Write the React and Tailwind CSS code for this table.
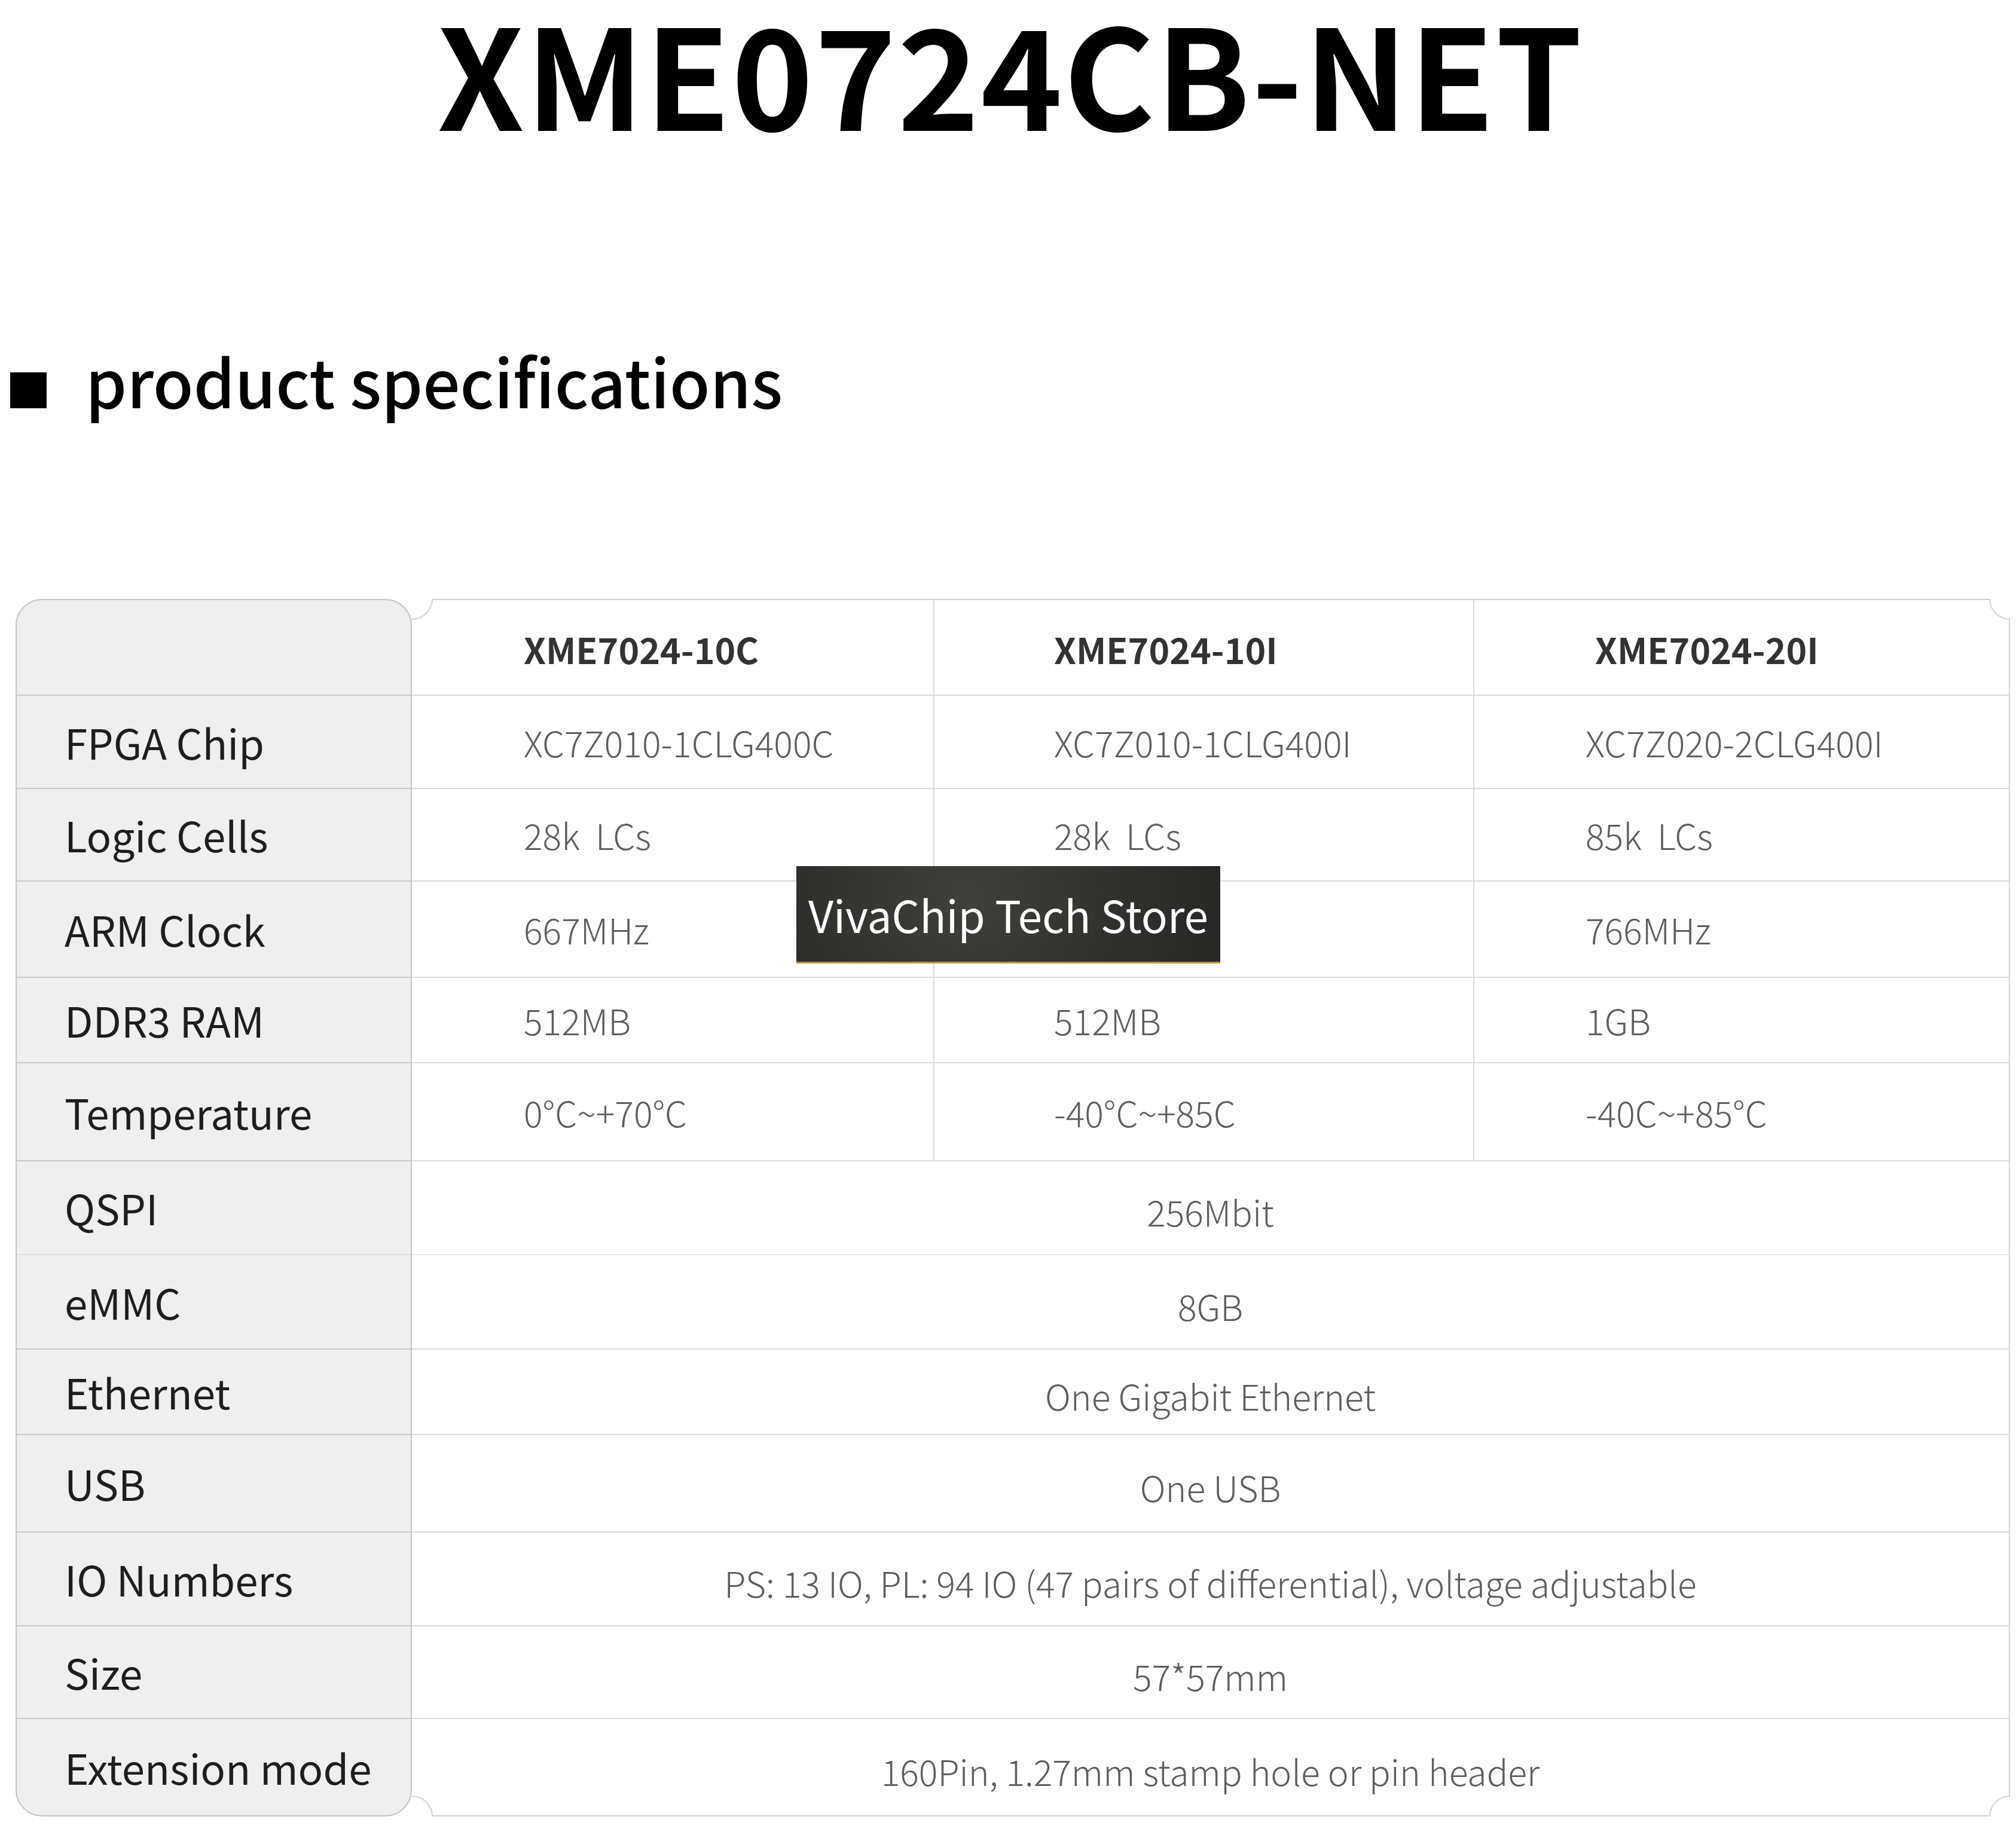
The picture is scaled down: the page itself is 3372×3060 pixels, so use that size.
import React from 'react';

const models = ['XME7024-10C', 'XME7024-10I', 'XME7024-20I'];

const splitRows = [
    { label: 'FPGA Chip', h: 'h-[156px]', vals: ['XC7Z010-1CLG400C', 'XC7Z010-1CLG400I', 'XC7Z020-2CLG400I'] },
    { label: 'Logic Cells', h: 'h-[155px]', vals: ['28k  LCs', '28k  LCs', '85k  LCs'] },
    { label: 'ARM Clock', h: 'h-[161px]', vals: ['667MHz', '667MHz', '766MHz'] },
    { label: 'DDR3 RAM', h: 'h-[143px]', vals: ['512MB', '512MB', '1GB'] },
    { label: 'Temperature', h: 'h-[164px]', vals: ['0°C~+70°C', '-40°C~+85C', '-40C~+85°C'] },
];

const mergedRows = [
    { label: 'QSPI', h: 'h-[157px]', val: '256Mbit', line: 'border-[#e8e8ec]' },
    { label: 'eMMC', h: 'h-[158px]', val: '8GB' },
    { label: 'Ethernet', h: 'h-[143px]', val: 'One Gigabit Ethernet' },
    { label: 'USB', h: 'h-[163px]', val: 'One USB' },
    { label: 'IO Numbers', h: 'h-[157px]', val: 'PS: 13 IO, PL: 94 IO (47 pairs of differential), voltage adjustable' },
    { label: 'Size', h: 'h-[155px]', val: '57*57mm' },
    { label: 'Extension mode', h: 'h-[161px]', val: '160Pin, 1.27mm stamp hole or pin header', last: true },
];

// column widths / paddings of the three model columns
const cols = [
    { w: 'w-[874px] border-r-2 border-[#d9d9de]', pad: 'pl-[187px]', headPad: 'pl-[187px]' },
    { w: 'w-[903px] border-r-2 border-[#d9d9de]', pad: 'pl-[200px]', headPad: 'pl-[200px]' },
    { w: 'flex-1', pad: 'pl-[186px]', headPad: 'pl-[202px]' },
];

const Notch = ({ pos, fill, arc }) => (
    <svg className={`absolute w-[36px] h-[36px] ${pos}`} viewBox="0 0 36 36">
        <path d={fill} fill="#ffffff" />
        <path d={arc} fill="none" stroke="#d2d2d7" strokeWidth="2" />
    </svg>
);

const App = () => {
    const labels = [
        { label: '', h: 'h-[160px]' },
        ...splitRows,
        ...mergedRows,
    ];

    return (
        <div className="relative w-[3372px] h-[3060px] bg-white overflow-hidden font-['Noto_Sans_CJK_SC','Noto_Sans',sans-serif]">
            <h1 className="mt-[2px] pl-[8px] text-center text-[232px] font-bold leading-none tracking-[2px] text-black">
                XME0724CB-NET
            </h1>

            <div className="mt-[346px] ml-[17px] flex items-start">
                <div className="mt-[43px] w-[61px] h-[60px] bg-black" />
                <h2 className="ml-[65px] text-[110px] font-medium leading-none text-black">
                    product specifications
                </h2>
            </div>

            <div className="mt-[312px] ml-[26px] flex">
                {/* label column */}
                <div className="w-[663px] shrink-0 rounded-[44px] border-2 border-[#c4c4c4] bg-[#efefef] overflow-hidden">
                    {labels.map((row, i) => (
                        <div
                            key={i}
                            className={`${row.h} flex items-center pl-[80px] text-[69px] leading-none text-[#1e1e1e] ${
                                row.last ? '' : `border-b-2 ${row.line ? 'border-[#dedede]' : 'border-[#cacaca]'}`
                            }`}
                        >
                            {row.label}
                        </div>
                    ))}
                </div>

                {/* values */}
                <div className="relative w-[2673px] border-2 border-l-0 border-[#d2d2d7] bg-white">
                    <Notch pos="top-[-2px] left-0" fill="M0 0 H35 A35 35 0 0 1 0 35 Z" arc="M34 0 A34 34 0 0 1 0 34" />
                    <Notch pos="top-[-2px] right-[-2px]" fill="M36 0 H1 A35 35 0 0 0 36 35 Z" arc="M2 0 A34 34 0 0 0 36 34" />
                    <Notch pos="bottom-[-2px] left-0" fill="M0 36 H35 A35 35 0 0 0 0 1 Z" arc="M34 36 A34 34 0 0 0 0 2" />
                    <Notch pos="bottom-[-2px] right-[-2px]" fill="M36 36 H1 A35 35 0 0 1 36 1 Z" arc="M2 36 A34 34 0 0 1 36 2" />

                    <div className="flex h-[160px] border-b-2 border-[#d9d9de]">
                        {models.map((m, i) => (
                            <div key={m} className={`${cols[i].w} ${cols[i].headPad} flex items-center pt-[5px] text-[59px] font-bold leading-none text-[#333333]`}>
                                {m}
                            </div>
                        ))}
                    </div>

                    {splitRows.map((row) => (
                        <div key={row.label} className={`flex ${row.h} border-b-2 border-[#d9d9de]`}>
                            {row.vals.map((v, i) => (
                                <div
                                    key={i}
                                    className={`${cols[i].w} ${cols[i].pad} flex items-center whitespace-pre text-[59px] font-light leading-none text-[#5e5e5e]`}
                                >
                                    {v}
                                </div>
                            ))}
                        </div>
                    ))}

                    {mergedRows.map((row) => (
                        <div
                            key={row.label}
                            className={`${row.h} flex items-center justify-center pt-[12px] text-[59px] font-light leading-none text-[#5e5e5e] ${
                                row.last ? '' : `border-b-2 ${row.line || 'border-[#d9d9de]'}`
                            }`}
                        >
                            {row.val}
                        </div>
                    ))}
                </div>
            </div>

            {/* store watermark */}
            <div className="absolute left-[1332px] top-[1449px] w-[709px] h-[163px] flex items-center justify-center border-b-[3px] border-[#b8963e] bg-[radial-gradient(circle_at_40%_30%,#403f3c,#262624)] text-[73px] leading-none text-white">
                VivaChip Tech Store
            </div>
        </div>
    );
};

export default App;
